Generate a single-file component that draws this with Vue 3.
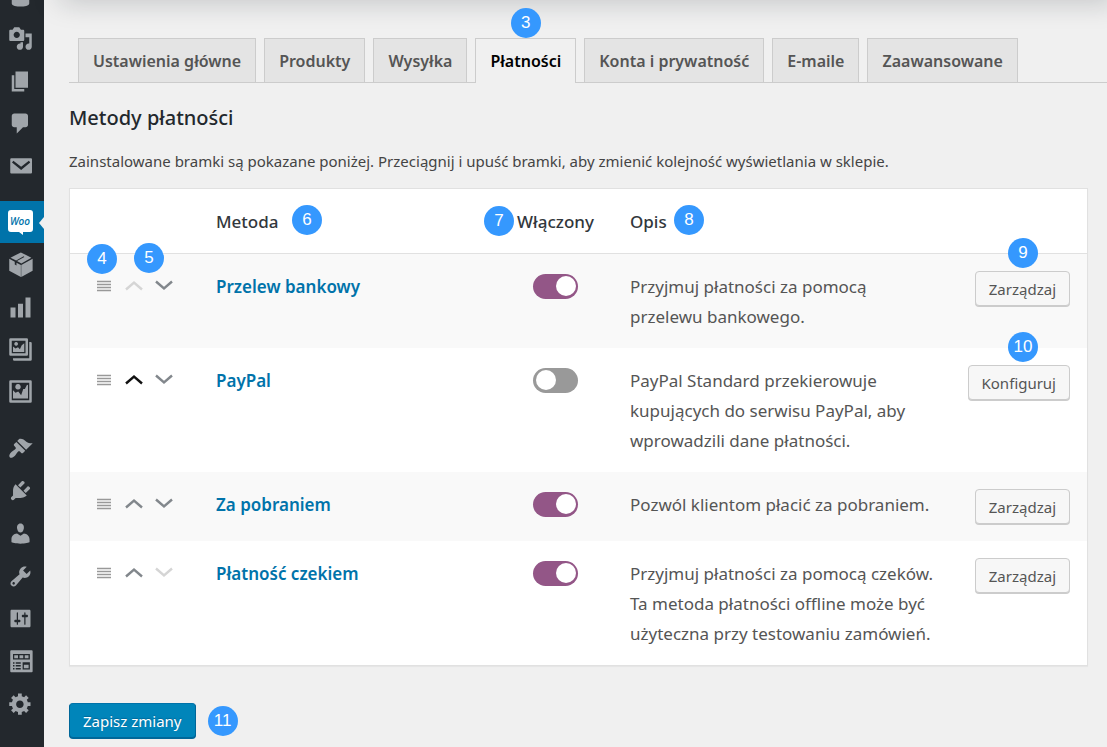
<script setup>
import { ref } from 'vue'

const menu = [
  [
    { name: 'Wpisy', icon: 'M10 9.25c-2.27 0-2.73-3.44-2.73-3.44C7 4.02 7.82 2 9.97 2c2.16 0 2.98 2.02 2.71 3.81 0 0-.41 3.44-2.68 3.44zM3 10h14v5.5C17 17.5 13 18 10 18s-7-.5-7-2.5z' },
    { name: 'Media', icon: 'M13 11V4c0-.55-.45-1-1-1h-1.67L9 1H5L3.67 3H2c-.55 0-1 .45-1 1v7c0 .55.45 1 1 1h10c.55 0 1-.45 1-1zM7 4.5c1.38 0 2.5 1.12 2.5 2.5S8.38 9.5 7 9.5 4.5 8.38 4.5 7 5.62 4.5 7 4.5zM14 6h5v10.5c0 1.38-1.12 2.5-2.5 2.5S14 17.88 14 16.5s1.12-2.5 2.5-2.5c.17 0 .34.02.5.05V9h-3V6zm-4 8.05V13h2v3.5c0 1.38-1.12 2.5-2.5 2.5S7 17.88 7 16.5 8.12 14 9.5 14c.17 0 .34.02.5.05z' },
    { name: 'Strony', icon: 'M6 15V2h10v13H6zm-1 1h8v2H3V5h2v11z' },
    { name: 'Komentarze', icon: 'M5 2h9q.82 0 1.41.59T16 4v7q0 .82-.59 1.41T14 13h-2l-5 5v-5H5q-.82 0-1.41-.59T3 11V4q0-.82.59-1.41T5 2z' },
    { name: 'Formularze', icon: 'M2.6 4.200h15.800q.8 0 .8.8v10.600q0 .8-.8.8H2.600q-.8 0-.8-.8V5q0-.8.8-.8zM4.300 6.200L3.200 7.500l7.300 6.100 7.300-6.100L16.700 6.200l-6.200 4.700z' }
  ],
  [
    { name: 'WooCommerce', woo: true },
    { name: 'Produkty', icon: 'M10.300.300l8.400 4.200-8 4.600L7.200 7.200l5.900-3.300-.6-.4L6.500 6.800 2 4.500zM1 5.400l4.400 2.300v2.300l1.400.8V8.500l3.500 1.900v9.500L1 15zM19.700 5.400V15l-9.100 4.900v-9.500z' },
    { name: 'Raporty', icon: 'M18 18V2h-4v16h4zm-6 0V7H8v11h4zm-6 0v-8H2v8h4z' },
    { name: 'Galerie', icon: 'M2 1h13q1 0 1 1v12q0 1-1 1H2q-1 0-1-1V2q0-1 1-1zM3 3v10h11V3zM17 4h1q1 0 1 1v13q0 1-1 1H5q-1 0-1-1v-1h13zM4 12V7.500l2 1.700 2-1 1.500 1.500L11 6.500l2-1.500V12zM6.500 4a1.500 1.500 0 1 0 .01 0z' },
    { name: 'Albumy', icon: 'M2 1h16q1 0 1 1v16q0 1-1 1H2q-1 0-1-1V2q0-1 1-1zM3 3v14h14V3zM4 15.500V9l2 2 2.200-1 2.300 3 1.700-5h1.300L15 5l1-.500v11zM8 4a2.200 2.200 0 1 0 .01 0z' }
  ],
  [
    { name: 'Wygląd', icon: 'M14.480 11.060L7.410 3.990l1.500-1.500c.5-.56 2.300-.47 3.510.32 1.210.8 1.430 1.280 2.910 2.100 1.180.64 2.450 1.260 4.450.85zm-.71.71L6.700 4.700 4.930 6.470c-.39.39-.39 1.020 0 1.410l1.060 1.060c.39.39.39 1.030 0 1.420-.6.6-1.430 1.110-2.210 1.690-.35.26-.7.53-1.010.84C1.430 14.230.4 16.080 1.400 17.070c.99 1 2.840-.03 4.180-1.360.31-.31.58-.66.85-1.020.57-.78 1.080-1.610 1.690-2.210.39-.39 1.020-.39 1.410 0l1.060 1.060c.39.39 1.020.39 1.410 0z' },
    { name: 'Wtyczki', icon: 'M13.110 4.360L9.870 7.600 8 5.730l3.240-3.240c.35-.34 1.050-.2 1.560.32.52.51.66 1.210.31 1.550zm-8 1.770l.91-1.120 9.010 9.010-1.190.84c-.71.71-2.630 1.160-3.820 1.160H6.140L4.900 17.260c-.59.59-1.540.59-2.120 0-.59-.58-.59-1.530 0-2.120l1.240-1.240v-3.880c0-1.130.4-3.190 1.090-3.890zm7.260 3.970l3.240-3.240c.34-.35 1.040-.21 1.550.31.52.51.66 1.210.31 1.550l-3.240 3.250z' },
    { name: 'Użytkownicy', icon: 'M10 9.250c-2.270 0-2.730-3.440-2.730-3.440C7 4.020 7.820 2 9.970 2c2.160 0 2.980 2.020 2.710 3.810 0 0-.41 3.440-2.680 3.440zm0 2.570L12.720 10c2.390 0 4.520 2.330 4.520 4.530v2.490s-3.650 1.130-7.240 1.130c-3.650 0-7.240-1.130-7.240-1.130v-2.490c0-2.250 1.940-4.480 4.470-4.480z' },
    { name: 'Narzędzia', icon: 'M16.680 9.770c-1.340 1.340-3.300 1.670-4.950.99l-5.410 6.520c-.99.99-2.590.99-3.580 0s-.99-2.590 0-3.570l6.520-5.420c-.68-1.650-.35-3.610.99-4.950 1.280-1.280 3.120-1.620 4.720-1.060l-2.890 2.890 2.820 2.820 2.860-2.870c.53 1.580.18 3.390-1.080 4.650zM3.810 16.210c.4.39 1.040.39 1.430 0 .4-.4.4-1.040 0-1.430-.39-.4-1.030-.4-1.430 0-.39.39-.39 1.030 0 1.430z' },
    { name: 'Ustawienia', icon: 'M18 16V4c0-.55-.45-1-1-1H3c-.55 0-1 .45-1 1v12c0 .55.45 1 1 1h14c.55 0 1-.45 1-1zM8 11h1c.55 0 1 .45 1 1s-.45 1-1 1H8v1.500c0 .28-.22.5-.5.5s-.5-.22-.5-.5V13H6c-.55 0-1-.45-1-1s.45-1 1-1h1V5.500c0-.28.22-.5.5-.5s.5.22.5.5V11zm5-2h-1c-.55 0-1-.45-1-1s.45-1 1-1h1V5.500c0-.28.22-.5.5-.5s.5.22.5.5V7h1c.55 0 1 .45 1 1s-.45 1-1 1h-1v5.500c0 .28-.22.5-.5.5s-.5-.22-.5-.5V9z' },
    { name: 'Pola', icon: 'M2.500 1h16.500q.7 0 .7.7v16.100q0 .7-.7.7H2.500q-.7 0-.7-.7V1.700q0-.7.7-.7zM4 4v4.300h13.500V4zM5 5h3v2.300H5zM9.200 5h3v2.300h-3zM13.400 5h3v2.300h-3zM11.700 10.500v5.800h5.800v-5.800zM12.700 12.500h3.800v2.800h-3.800zM4 10.500v1.200h1.200v-1.200zM6.200 10.500v1.200h4v-1.200zM4 12.800V14h1.200v-1.200zM6.200 12.800V14h4v-1.200zM4 15.100v1.200h1.200v-1.200zM6.200 15.100v1.200h4v-1.200z' },
    { name: 'Opcje', icon: 'M18 12h-2.180c-.17.7-.44 1.350-.81 1.930l1.540 1.540-2.100 2.100-1.540-1.540c-.58.36-1.230.63-1.910.79V19H8v-2.180c-.68-.16-1.330-.43-1.910-.79l-1.540 1.540-2.120-2.120 1.540-1.540c-.36-.58-.63-1.230-.79-1.910H1V9.030h2.170c.16-.7.44-1.350.8-1.940L2.430 5.550l2.100-2.100 1.540 1.540c.58-.37 1.240-.64 1.930-.81V2h3v2.180c.68.16 1.330.43 1.910.79l1.540-1.540 2.120 2.120-1.540 1.540c.36.59.64 1.240.8 1.940H18V12zm-8.500 1.500c1.660 0 3-1.340 3-3s-1.340-3-3-3-3 1.340-3 3 1.340 3 3 3z' }
  ]
]

const tabs = [
  { label: 'Ustawienia główne' },
  { label: 'Produkty' },
  { label: 'Wysyłka' },
  { label: 'Płatności', active: true, step: 3 },
  { label: 'Konta i prywatność' },
  { label: 'E-maile' },
  { label: 'Zaawansowane' }
]

const gateways = ref([
  { name: 'Przelew bankowy', on: true, text: 'Przyjmuj płatności za pomocą\nprzelewu bankowego.', action: 'Zarządzaj', step: 9 },
  { name: 'PayPal', on: false, text: 'PayPal Standard przekierowuje\nkupujących do serwisu PayPal, aby\nwprowadzili dane płatności.', action: 'Konfiguruj', step: 10, hot: true },
  { name: 'Za pobraniem', on: true, text: 'Pozwól klientom płacić za pobraniem.', action: 'Zarządzaj' },
  { name: 'Płatność czekiem', on: true, text: 'Przyjmuj płatności za pomocą czeków.\nTa metoda płatności offline może być\nużyteczna przy testowaniu zamówień.', action: 'Zarządzaj' }
])
</script>

<template>
  <div class="page">
    <nav class="side" aria-label="Menu">
      <div v-for="(group, g) in menu" :key="g" class="group" :class="'group-' + g">
        <a v-for="item in group" :key="item.name" href="#" class="item" :class="{ current: item.woo }" :aria-label="item.name">
          <svg v-if="item.woo" class="icon" viewBox="0 0 25 25" aria-hidden="true">
            <path fill="#fff" d="M3 0h19q3 0 3 3v16q0 3-3 3h-7v3l-4-3H3q-3 0-3-3V3q0-3 3-3z" />
            <text x="12" y="15" text-anchor="middle" class="woo">Woo</text>
          </svg>
          <svg v-else class="icon" viewBox="0 0 20 20" aria-hidden="true">
            <path :d="item.icon" fill-rule="evenodd" />
          </svg>
        </a>
      </div>
    </nav>

    <main class="content">
      <div class="top-shadow"></div>
      <nav class="tabs" aria-label="Ustawienia">
        <a v-for="tab in tabs" :key="tab.label" href="#" class="tab" :class="{ active: tab.active }">
          {{ tab.label }}<span v-if="tab.step" class="badge at-tab">{{ tab.step }}</span>
        </a>
      </nav>

      <h2>Metody płatności</h2>
      <p class="intro">Zainstalowane bramki są pokazane poniżej. Przeciągnij i upuść bramki, aby zmienić kolejność wyświetlania w sklepie.</p>

      <table>
        <colgroup>
          <col class="c-sort" /><col /><col class="c-status" /><col class="c-text" /><col class="c-action" />
        </colgroup>
        <thead>
          <tr>
            <th></th>
            <th><span class="anchor">Metoda<span class="badge at-method">6</span></span></th>
            <th class="center"><span class="anchor">Włączony<span class="badge at-status">7</span></span></th>
            <th><span class="anchor">Opis<span class="badge at-text">8</span></span></th>
            <th></th>
          </tr>
        </thead>
        <tbody>
          <tr v-for="(row, i) in gateways" :key="row.name">
            <td>
              <div class="sort">
                <svg class="grip" viewBox="0 0 14 12" aria-hidden="true"><path d="M0 1.500h14M0 4.500h14M0 7.500h14M0 10.500h14" /></svg>
                <button type="button" class="move" :class="{ hot: row.hot }" :disabled="i === 0" aria-label="W górę">
                  <svg viewBox="0 0 18 12" aria-hidden="true"><path d="M1 9.500L9 2.500l8 7" /></svg>
                </button>
                <button type="button" class="move" :disabled="i === gateways.length - 1" aria-label="W dół">
                  <svg viewBox="0 0 18 12" aria-hidden="true"><path d="M1 1.500L9 8.500l8-7" /></svg>
                </button>
                <template v-if="i === 0">
                  <span class="badge at-grip">4</span>
                  <span class="badge at-move">5</span>
                </template>
              </div>
            </td>
            <td class="title"><a href="#" class="name">{{ row.name }}</a></td>
            <td class="center"><input v-model="row.on" type="checkbox" role="switch" class="switch" :aria-label="row.name" /></td>
            <td class="text">{{ row.text }}</td>
            <td class="right">
              <span class="anchor">
                <button type="button" class="button">{{ row.action }}</button>
                <span v-if="row.step" class="badge at-action">{{ row.step }}</span>
              </span>
            </td>
          </tr>
        </tbody>
      </table>

      <div class="submit">
        <button type="button" class="button primary">Zapisz zmiany</button>
        <span class="badge inline">11</span>
      </div>
    </main>
  </div>
</template>

<style>
body {
  background: #f0f0f0;
  overflow: hidden;
}
</style>

<style scoped>
.page {
  display: flex;
  min-height: 100vh;
  color: #444;
  font-family: "Noto Sans", "Open Sans", sans-serif;
  font-size: 15px;
}
.page * {
  box-sizing: border-box;
}
a {
  text-decoration: none;
}

.side {
  flex: none;
  width: 44px;
  background: #23282d;
  display: flex;
  flex-direction: column;
  gap: 14px;
}
.group {
  display: flex;
  flex-direction: column;
  height: 212px;
}
.group-0 {
  margin-top: -25px;
}
.group-2 {
  height: 298px;
}
.item {
  flex: 1;
  display: flex;
  align-items: center;
  padding-left: 8px;
}
.icon {
  width: 25px;
  height: 25px;
  fill: #a0a5aa;
}
.current {
  background: #0073aa;
  position: relative;
}
.current::after {
  content: "";
  position: absolute;
  right: 0;
  top: 16px;
  border: 6px solid transparent;
  border-right: 5px solid #f0f0f0;
  border-left: 0;
}
.woo {
  font: italic 600 10px "Open Sans", sans-serif;
  fill: #0073aa;
}

.content {
  position: relative;
  flex: 1;
  min-width: 0;
  padding: 38px 0 8px 25px;
}
.top-shadow {
  position: absolute;
  left: 6px;
  right: 0;
  top: -20px;
  height: 20px;
  box-shadow: 10px 0 28px rgba(20, 28, 36, 0.26);
}
.tabs {
  display: flex;
  gap: 8px;
  padding-left: 9px;
  border-bottom: 1px solid #ccc;
}
.tab {
  position: relative;
  height: 44px;
  padding: 0 14px;
  border: 1px solid #ccc;
  border-bottom: 0;
  background: #e4e4e4;
  color: #555;
  font-size: 16px;
  font-weight: 600;
  line-height: 45px;
  white-space: nowrap;
}
.tab.active {
  height: 45px;
  margin-bottom: -1px;
  background: #f0f0f0;
  color: #000;
}
h2 {
  margin: 19px 0 0;
  color: #23282d;
  font-size: 20px;
  font-weight: 500;
  line-height: 32px;
}
.intro {
  margin: 15px 0;
  line-height: 24px;
}

table {
  width: calc(100% - 19px);
  table-layout: fixed;
  border-collapse: separate;
  border-spacing: 0;
  border: 1px solid #e1e1e1;
  background: #fff;
  box-shadow: 0 1px 1px rgba(0, 0, 0, 0.04);
}
.c-sort {
  width: 129px;
}
.c-status {
  width: 112px;
}
.c-text {
  width: 338px;
}
.c-action {
  width: 136px;
}
th {
  height: 65px;
  padding: 2px 17px 0;
  border-bottom: 1px solid #e1e1e1;
  color: #32373c;
  font-size: 17px;
  font-weight: 500;
  line-height: 24px;
  text-align: left;
  white-space: nowrap;
}
td {
  padding: 17px;
  font-size: 17px;
  line-height: 30px;
  vertical-align: top;
}
td.title,
td.text {
  padding-top: 18px;
  padding-bottom: 16px;
}
tbody tr:nth-child(odd) {
  background: #f9f9f9;
}
.center {
  text-align: center;
  padding-left: 0;
  padding-right: 3px;
}
.right {
  text-align: right;
  padding-left: 0;
}
.anchor {
  position: relative;
  display: inline-block;
}
.text {
  color: #555;
  white-space: pre;
}
.name {
  color: #0073aa;
  font-weight: 600;
}
.sort {
  position: relative;
  display: flex;
  align-items: center;
  gap: 12px;
  height: 30px;
  padding-left: 10px;
}
.grip {
  flex: none;
  width: 14px;
  height: 12px;
  margin-right: 2px;
  stroke: #999;
  stroke-width: 1.3;
}
.move {
  flex: none;
  width: 18px;
  height: 12px;
  padding: 0;
  border: 0;
  background: none;
  color: #82878c;
  line-height: 0;
}
.move svg {
  width: 18px;
  height: 12px;
  fill: none;
  stroke: currentColor;
  stroke-width: 2.4;
}
.move.hot {
  color: #111;
}
.move:disabled {
  color: #d5d5d5;
}
.switch {
  appearance: none;
  display: block;
  width: 45px;
  height: 25px;
  margin: 3px auto 0;
  padding: 2px 3px;
  border-radius: 13px;
  background: #999;
}
.switch::before {
  content: "";
  display: block;
  width: 20px;
  height: 20px;
  border-radius: 50%;
  background: #fff;
}
.switch:checked {
  padding-left: 23px;
  background: #935687;
}
.button {
  display: block;
  height: 35px;
  padding: 0 13px;
  border: 1px solid #ccc;
  border-radius: 4px;
  background: #f7f7f7;
  box-shadow: 0 1px 0 #ccc;
  color: #555;
  font: 400 15px "Noto Sans", "Open Sans", sans-serif;
}
.submit {
  display: flex;
  align-items: center;
  gap: 12px;
  margin-top: 37px;
}
.primary {
  border-color: #0073aa #006799 #006799;
  background: #0085ba;
  box-shadow: 0 1px 0 #006799;
  color: #fff;
  text-shadow: 0 -1px 1px #006799;
}

.badge {
  position: absolute;
  z-index: 1;
  width: 30px;
  height: 30px;
  border-radius: 50%;
  background: #3598fe;
  color: #fff;
  font: 400 17px/29px "Liberation Sans", Arial, sans-serif;
  text-align: center;
}
.badge.inline {
  position: static;
}
.at-tab {
  left: calc(50% - 15px);
  top: -31px;
}
.at-method {
  left: 76px;
  top: -5px;
}
.at-status {
  right: 80px;
  top: -4px;
}
.at-text {
  left: 44px;
  top: -5px;
}
.at-grip {
  left: 0;
  top: -27px;
}
.at-move {
  left: 47px;
  top: -28px;
}
.at-action {
  right: 32px;
  top: -33px;
}
</style>
